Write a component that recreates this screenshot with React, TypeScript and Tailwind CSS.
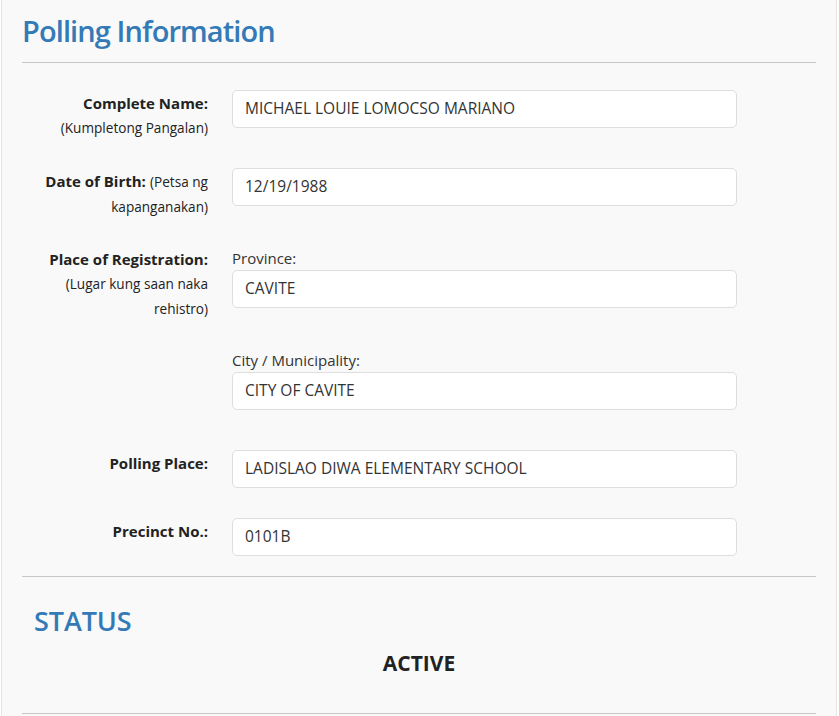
import React from "react";

const font = { fontFamily: '"Open Sans", "Noto Sans", sans-serif' };

type Row = {
  label: React.ReactNode;
  value?: string;
  caption?: string;
  className: string;
};

function Field({ caption, value }: { caption?: string; value: string }) {
  return (
    <div className="w-[505px]">
      {caption && <div className="h-6 leading-6 text-[15px] text-[#333]">{caption}</div>}
      <div className="h-[38px] rounded-[5px] border border-[#dedede] bg-white px-3 flex items-center text-[15.5px] text-[#333]">
        {value}
      </div>
    </div>
  );
}

export default function App() {
  const rows: Row[] = [
    {
      label: (
        <>
          <b className="text-[15px]">Complete Name:</b>
          <br />
          <span className="text-[13.6px]">(Kumpletong Pangalan)</span>
        </>
      ),
      value: "MICHAEL LOUIE LOMOCSO MARIANO",
      className: "h-[78px]",
    },
    {
      label: (
        <>
          <b className="text-[15px]">Date of Birth:</b> <span className="text-[13.6px]">(Petsa ng</span>
          <br />
          <span className="text-[13.6px]">kapanganakan)</span>
        </>
      ),
      value: "12/19/1988",
      className: "h-[78px]",
    },
    {
      label: (
        <>
          <b className="text-[15px]">Place of Registration:</b>
          <br />
          <span className="text-[13.6px]">(Lugar kung saan naka</span>
          <br />
          <span className="text-[13.6px]">rehistro)</span>
        </>
      ),
      caption: "Province:",
      value: "CAVITE",
      className: "h-[102px]",
    },
    {
      label: null,
      caption: "City / Municipality:",
      value: "CITY OF CAVITE",
      className: "h-[102px]",
    },
    {
      label: <b className="text-[15px]">Polling Place:</b>,
      value: "LADISLAO DIWA ELEMENTARY SCHOOL",
      className: "h-[68px]",
    },
    {
      label: <b className="text-[15px]">Precinct No.:</b>,
      value: "0101B",
      className: "h-[58px]",
    },
  ];

  return (
    <div className="min-h-screen bg-white" style={font}>
      <div className="ml-px w-[836px] min-h-[716px] border-x border-[#e6e6e6] bg-[#f9f9f9] px-5">
        <h2 className="pt-[14px] pb-[14px] text-[29px] leading-[34px] font-semibold text-[#337ab7] tracking-[-0.9px]">
          Polling Information
        </h2>
        <div className="border-t border-[#c8c8c8]" />

        <div className="pt-[27px]">
          {rows.map((r, i) => (
            <div key={i} className={`flex gap-6 ${r.className}`}>
              <div className="w-[186px] pt-px text-right leading-6 text-[#222]">{r.label}</div>
              <Field caption={r.caption} value={r.value ?? ""} />
            </div>
          ))}
        </div>

        <div className="border-t border-[#c8c8c8]" />

        <div className="px-3">
          <h2 className="pt-[28px] text-[27px] leading-8 font-semibold text-[#337ab7] tracking-[-0.1px]">STATUS</h2>
          <div className="pt-[12px] text-center text-[21px] leading-7 font-bold text-[#222]">ACTIVE</div>
        </div>

        <div className="mt-[36px] border-t border-[#c8c8c8]" />
      </div>
    </div>
  );
}
